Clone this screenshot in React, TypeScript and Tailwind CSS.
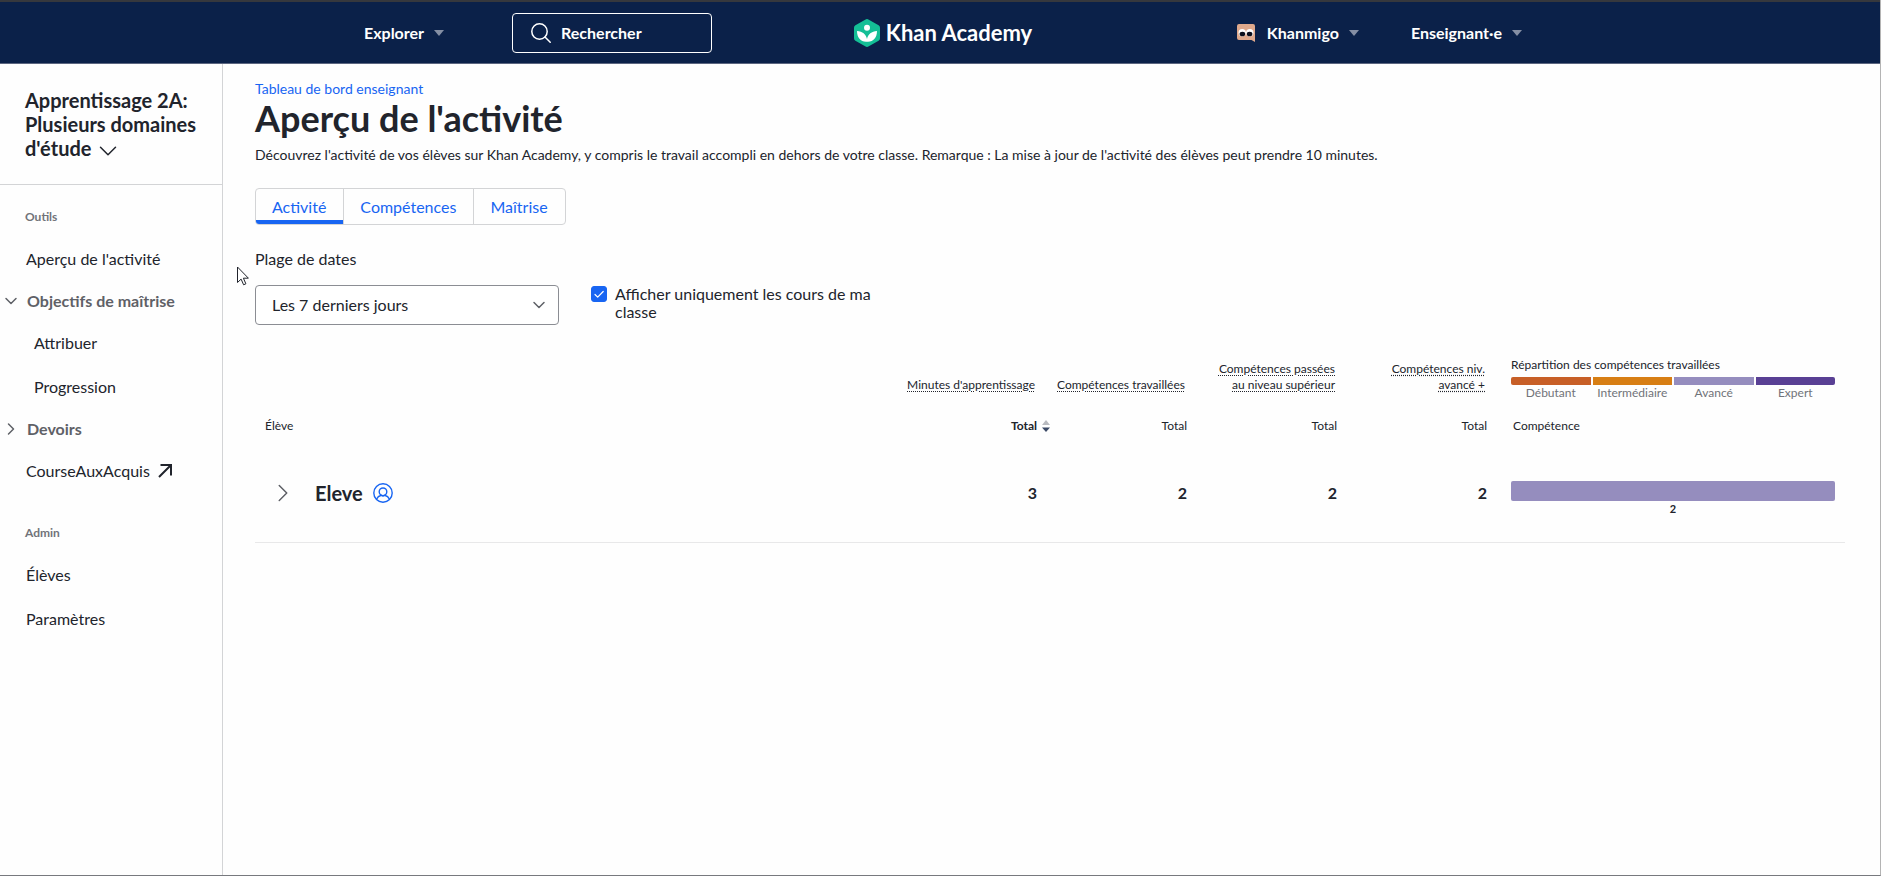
import { useState } from "react";

interface Skill {
  label: string;
  color: string;
}

interface Student {
  name: string;
  totals: number[];
  advanced: number;
}

const SKILLS: Skill[] = [
  { label: "Débutant", color: "bg-[#c75f27]" },
  { label: "Intermédiaire", color: "bg-[#d77e14]" },
  { label: "Avancé", color: "bg-[#958dbe]" },
  { label: "Expert", color: "bg-[#594094]" },
];

const COLUMNS = [
  ["Minutes d'apprentissage"],
  ["Compétences travaillées"],
  ["Compétences passées", "au niveau supérieur"],
  ["Compétences niv.", "avancé +"],
];

const STUDENTS: Student[] = [{ name: "Eleve", totals: [3, 2, 2, 2], advanced: 2 }];

const TABS = ["Activité", "Compétences", "Maîtrise"];

function Caret() {
  return (
    <svg width="10" height="6" viewBox="0 0 10 6" className="fill-[#858fa4]">
      <path d="M0 0h10L5 6z" />
    </svg>
  );
}

function Chevron({ className, size = 16, width = 1.5 }: { className?: string; size?: number; width?: number }) {
  return (
    <svg
      width={size}
      height={size}
      viewBox="0 0 16 16"
      fill="none"
      stroke="currentColor"
      strokeWidth={width}
      strokeLinecap="round"
      strokeLinejoin="round"
      className={className}
    >
      <path d="M3 5.5l5 5 5-5" />
    </svg>
  );
}

function Logo() {
  return (
    <a href="#" className="flex items-center gap-1.5 text-white">
      <svg width="26" height="28" viewBox="0 0 26 28">
        <path
          d="M11.6.4a2.8 2.8 0 0 1 2.8 0l10.2 5.9A2.8 2.8 0 0 1 26 8.7v10.6a2.8 2.8 0 0 1-1.4 2.4l-10.2 5.9a2.8 2.8 0 0 1-2.8 0L1.4 21.7A2.8 2.8 0 0 1 0 19.3V8.7a2.8 2.8 0 0 1 1.4-2.4z"
          fill="#14bf96"
        />
        <circle cx="13" cy="8.8" r="3" fill="#fff" />
        <path
          d="M23 12c-5.500.3-9 3.200-10 8-1-4.800-4.500-7.700-10-8 0 6.500 3.600 10.700 9 10.700h2c5.400 0 9-4.200 9-10.700z"
          fill="#fff"
        />
      </svg>
      <span className="text-[22px] leading-7 font-bold">Khan Academy</span>
    </a>
  );
}

function Header() {
  return (
    <header className="border-t-2 border-b border-t-[#36383d] border-b-[#5c6680] bg-[#0b2149]">
      <div className="mx-auto grid h-[61px] max-w-[1200px] grid-cols-[1fr_auto_1fr] items-center pr-[18px] pl-6 text-base font-bold text-white">
        <div className="flex items-center gap-[68px]">
          <button className="flex items-center gap-2.5">
            Explorer
            <Caret />
          </button>
          <label className="flex h-10 w-[200px] items-center gap-2.5 rounded border border-white px-[18px]">
            <svg width="20" height="20" viewBox="0 0 20 20" fill="none" stroke="currentColor" strokeWidth="1.5" strokeLinecap="round" className="shrink-0">
              <circle cx="8.5" cy="8.5" r="7.7" />
              <path d="M14 14l5.2 5.2" />
            </svg>
            <input
              type="search"
              aria-label="Rechercher"
              placeholder="Rechercher"
              className="w-full min-w-0 bg-transparent outline-none placeholder:text-white"
            />
          </label>
        </div>
        <Logo />
        <div className="flex items-center justify-end gap-[52px]">
          <button className="flex items-center">
            <svg width="18" height="18" viewBox="0 0 18 18" className="mr-3">
              <path d="M2 0h14a2 2 0 0 1 2 2v16l-3.500-2H2a2 2 0 0 1-2-2V2a2 2 0 0 1 2-2z" fill="#dfa98c" />
              <circle cx="5.2" cy="8.8" r="3.7" fill="#fff" />
              <circle cx="12.8" cy="8.8" r="3.7" fill="#fff" />
              <ellipse cx="5.4" cy="10" rx="2.8" ry="2.3" fill="#0b0f1c" />
              <ellipse cx="12.6" cy="10" rx="2.8" ry="2.3" fill="#0b0f1c" />
            </svg>
            <span className="mr-2.5">Khanmigo</span>
            <Caret />
          </button>
          <button className="flex items-center gap-2.5">
            Enseignant·e
            <Caret />
          </button>
        </div>
      </div>
    </header>
  );
}

function Sidebar() {
  return (
    <aside className="w-[223px] shrink-0 border-r border-[#d3d4d6]">
      <div className="border-b border-[#d3d4d6] pt-6 pr-4 pb-[21px] pl-[25px]">
        <button className="text-left text-xl leading-6 font-bold">
          Apprentissage 2A: Plusieurs domaines d'étude <Chevron size={24} width={1} className="inline-block align-middle" />
        </button>
      </div>

      <nav className="pt-6 text-base">
        <h2 className="mb-3 pl-[25px] text-xs leading-4 font-bold text-[#717379]">Outils</h2>
        <a href="#" className="flex h-11 items-center pl-[26px]">Aperçu de l'activité</a>
        <button className="flex h-10 w-full items-center gap-2 pl-[3px] font-bold text-[#5f6167]">
          <Chevron />
          Objectifs de maîtrise
        </button>
        <a href="#" className="flex h-11 items-center pl-[34px]">Attribuer</a>
        <a href="#" className="flex h-11 items-center pl-[34px]">Progression</a>
        <button className="flex h-10 w-full items-center gap-2 pl-[3px] font-bold text-[#5f6167]">
          <Chevron className="-rotate-90" />
          Devoirs
        </button>
        <a href="#" className="flex h-11 items-center gap-2 pl-[26px]">
          CourseAuxAcquis
          <svg width="14" height="14" viewBox="0 0 14 14" fill="none" stroke="currentColor" strokeWidth="2">
            <path d="M1 13L12.5 1.5M2.5 1H13v10.5" />
          </svg>
        </a>

        <h2 className="mt-8 mb-3 pl-[25px] text-xs leading-4 font-bold text-[#717379]">Admin</h2>
        <a href="#" className="flex h-11 items-center pl-[26px]">Élèves</a>
        <a href="#" className="flex h-11 items-center pl-[26px]">Paramètres</a>
      </nav>
    </aside>
  );
}

function Filters() {
  const [onlyClass, setOnlyClass] = useState(true);

  return (
    <div className="mt-6 flex items-end gap-8">
      <div className="w-[304px]">
        <label htmlFor="range" className="block text-base leading-5">Plage de dates</label>
        <div className="relative mt-4">
          <select id="range" className="h-10 w-full appearance-none rounded border border-[#8b8d93] bg-white px-4 text-base">
            <option>Les 7 derniers jours</option>
            <option>Les 30 derniers jours</option>
          </select>
          <Chevron className="pointer-events-none absolute top-3 right-3 text-[#5f6167]" />
        </div>
      </div>
      <label className="flex h-10 w-[280px] items-start gap-2 text-base leading-[18px]">
        <span className="relative mt-px size-4 shrink-0">
          <input
            type="checkbox"
            checked={onlyClass}
            onChange={(e) => setOnlyClass(e.target.checked)}
            className="block size-4 appearance-none rounded-[3px] border border-[#8b8d93] checked:border-[#1865f2] checked:bg-[#1865f2]"
          />
          {onlyClass && (
            <svg viewBox="0 0 16 16" fill="none" stroke="#fff" strokeWidth="1.2" strokeLinecap="round" strokeLinejoin="round" className="pointer-events-none absolute inset-0">
              <path d="M4 8.5l2.7 2.7L12.2 5.5" />
            </svg>
          )}
        </span>
        Afficher uniquement les cours de ma classe
      </label>
    </div>
  );
}

function ActivityTable() {
  return (
    <table className="mt-8 w-full table-fixed text-xs leading-4">
      <colgroup>
        <col />
        <col className="w-[150px]" />
        <col className="w-[150px]" />
        <col className="w-[150px]" />
        <col className="w-[150px]" />
        <col className="w-[350px]" />
      </colgroup>
      <thead>
        <tr>
          <td />
          {COLUMNS.map((lines) => (
            <th key={lines[0]} className="pr-2.5 pb-2 text-right align-bottom font-normal whitespace-nowrap">
              {lines.map((line) => (
                <span key={line} className="block underline decoration-dotted underline-offset-2">{line}</span>
              ))}
            </th>
          ))}
          <th className="pr-2.5 pl-4 text-left align-bottom font-normal">
            <div>Répartition des compétences travaillées</div>
            <div className="mt-1 grid grid-cols-4 gap-x-0.5 text-center text-[#717379]">
              {SKILLS.map((skill) => (
                <div key={skill.label} className="group">
                  <div className={`h-2 group-first:rounded-l-xs group-last:rounded-r-xs ${skill.color}`} />
                  {skill.label}
                </div>
              ))}
            </div>
          </th>
        </tr>
        <tr className="h-[50px]">
          <th className="pl-2.5 text-left font-normal">Élève</th>
          <th className="pr-2 text-right font-bold">
            <button className="relative">
              Total
              <svg width="8" height="12" viewBox="0 0 8 12" className="absolute top-0.5 left-full ml-[5px]">
                <path d="M0 5l4-5 4 5z" fill="#b8babf" />
                <path d="M0 7.500l4 4.500 4-4.500z" fill="#3b4a66" />
              </svg>
            </button>
          </th>
          <th className="pr-2 text-right font-normal">Total</th>
          <th className="pr-2 text-right font-normal">Total</th>
          <th className="pr-2 text-right font-normal">Total</th>
          <th className="pl-[18px] text-left font-normal">Compétence</th>
        </tr>
      </thead>
      <tbody>
        {STUDENTS.map((student) => (
          <tr key={student.name} className="h-[91px] border-b border-[#e8e8e9]">
            <td className="pb-1.5 pl-4">
              <div className="flex items-center">
                <button aria-label="Développer">
                  <Chevron size={24} width={1} className="-rotate-90 text-[#5f6167]" />
                </button>
                <span className="ml-5 text-xl leading-6 font-bold">{student.name}</span>
                <svg width="20" height="20" viewBox="0 0 20 20" fill="none" stroke="#1865f2" strokeWidth="1.4" className="ml-2.5">
                  <circle cx="10" cy="10" r="9.2" />
                  <circle cx="10" cy="8.8" r="3.8" />
                  <path d="M3.500 16.300c1-2.200 2.600-3.400 4.800-4l1.700.7 1.700-.7c2.200.6 3.800 1.800 4.800 4" />
                </svg>
              </div>
            </td>
            {student.totals.map((total, i) => (
              <td key={i} className="pr-2 pb-1.5 text-right text-base font-bold">{total}</td>
            ))}
            <td className="pt-1 pr-2.5 pl-4 text-center text-[11px] leading-3 font-bold">
              <div className="mb-0.5 h-5 rounded-xs bg-[#958dbe]" />
              {student.advanced}
            </td>
          </tr>
        ))}
      </tbody>
    </table>
  );
}

export default function App() {
  const [tab, setTab] = useState("Activité");

  return (
    <div className="flex min-h-screen flex-col border-r border-b border-r-[#b4b4b4] border-b-[#77797e] bg-[#fefefe] font-['Lato',sans-serif] text-[#21242c]">
      <Header />
      <div className="flex grow">
        <Sidebar />
        <main className="min-w-0 grow pt-4 pr-[35px] pl-8">
          <a href="#" className="block text-sm leading-[18px] text-[#1865f2]">Tableau de bord enseignant</a>
          <h1 className="text-4xl leading-10 font-bold">Aperçu de l'activité</h1>
          <p className="mt-[7px] text-sm leading-5">
            Découvrez l'activité de vos élèves sur Khan Academy, y compris le travail accompli en dehors de votre classe. Remarque : La mise à jour de l'activité des élèves peut prendre 10 minutes.
          </p>

          <div role="tablist" className="mt-[23px] flex h-[37px] w-fit overflow-hidden rounded border border-[#d3d4d6]">
            {TABS.map((name) => (
              <button
                key={name}
                role="tab"
                aria-selected={tab === name}
                onClick={() => setTab(name)}
                className={`border-r border-[#d3d4d6] pr-[17px] pl-4 text-base text-[#1865f2] last:border-r-0 ${
                  tab === name ? "shadow-[inset_0_-4px_0_#1865f2]" : ""
                }`}
              >
                {name}
              </button>
            ))}
          </div>

          <Filters />
          <ActivityTable />
        </main>
      </div>

      {/* Mouse pointer */}
      <svg width="12" height="20" viewBox="0 0 12 20" className="pointer-events-none absolute top-[266px] left-[237px]">
        <path d="M.5 1v15.500l3.600-3.400 2.500 5.700 2.300-1-2.500-5.600h5z" fill="#fff" stroke="#21242c" />
      </svg>
    </div>
  );
}
